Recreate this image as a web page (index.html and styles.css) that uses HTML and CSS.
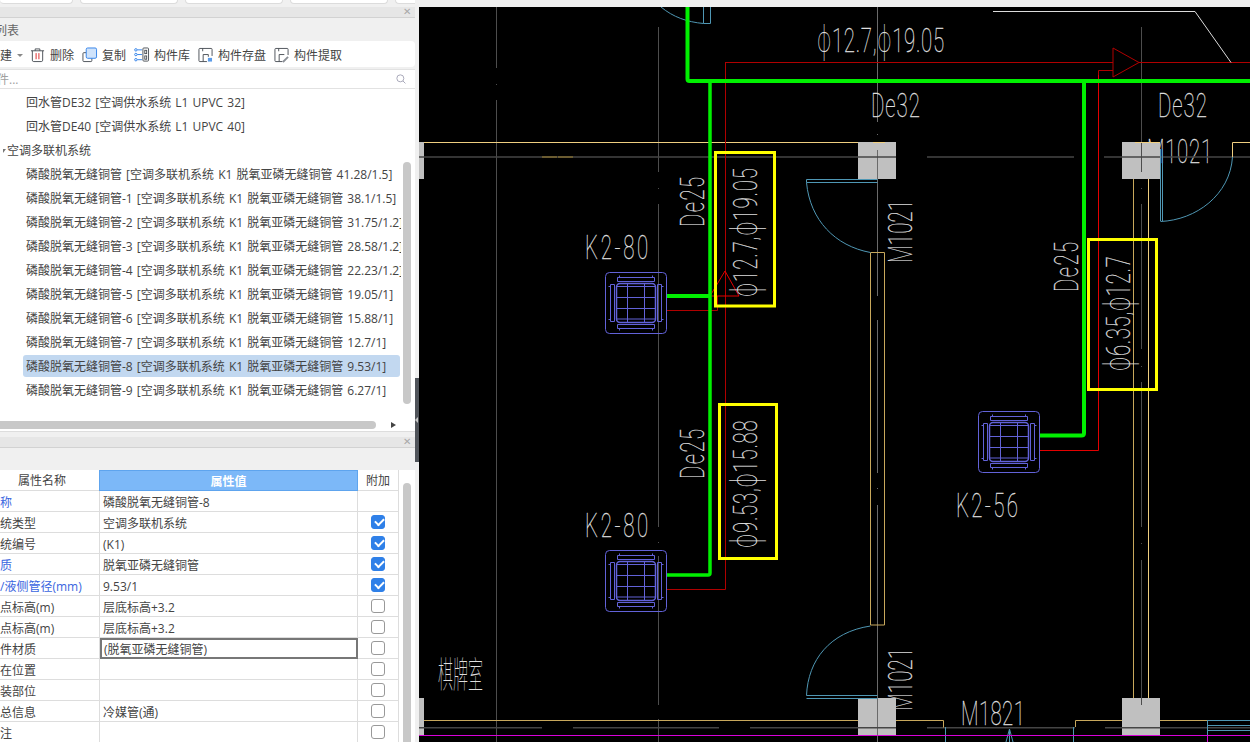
FILE: index.html
```html
<!DOCTYPE html>
<html lang="zh-CN">
<head>
<meta charset="utf-8">
<title>构件列表</title>
<link rel="stylesheet" href="styles.css">
</head>
<body>
<div class="app">
  <aside class="side">
    <div class="tabs">
      <span class="tab tab-a"></span><span class="tab"></span><span class="tab"></span><span class="tab"></span><span class="tab tab-z"></span>
    </div>

    <section class="panel list-panel">
      <div class="dock"><span class="close">✕</span></div>
      <div class="title"><span class="title-text">构件列表</span></div>
      <div class="toolbar">
        <span class="tool tool-new">新建<i class="caret"></i></span>
        <span class="tool">
          <svg class="ico" viewBox="0 0 16 16"><path class="i-dk" d="M1 3.500h14M5.500 3.500V1.500h5v2M2.500 3.500v10a1.500 1.500 0 0 0 1.500 1.500h8a1.500 1.500 0 0 0 1.500-1.500v-10"/><path class="i-rd" d="M6.500 6v6.500M9.500 6v6.500"/></svg>删除</span>
        <span class="tool">
          <svg class="ico" viewBox="0 0 16 16"><path class="i-dk" d="M4.500 5.500H2a1 1 0 0 0-1 1V14a1 1 0 0 0 1 1h7.500a1 1 0 0 0 1-1v-2.500"/><rect class="i-bl" x="4.500" y="0.500" width="11" height="11" rx="1.500"/></svg>复制</span>
        <span class="tool">
          <svg class="ico" viewBox="0 0 16 16"><path class="i-blue" d="M3.500 2.500h5M3.500 7.500h5M3.500 13h5"/><circle class="i-blue" cx="2" cy="2.500" r="1.300"/><circle class="i-blue" cx="2" cy="7.500" r="1.300"/><circle class="i-blue" cx="2" cy="13" r="1.300"/><rect class="i-dk" x="9.500" y="0.500" width="6" height="14" rx="1"/><rect class="i-dk" x="11.500" y="3" width="2" height="3.500"/><rect class="i-dk" x="11.500" y="9" width="2" height="3.500"/></svg>构件库</span>
        <span class="tool">
          <svg class="ico" viewBox="0 0 16 16"><path class="i-dk" d="M10 15H2a1 1 0 0 1-1-1V2a1 1 0 0 1 1-1h12a1 1 0 0 1 1 1v7M5.500 15V7.500H11V10M5 1v3"/><rect class="i-save" x="10" y="10.500" width="5.500" height="5"/></svg>构件存盘</span>
        <span class="tool">
          <svg class="ico" viewBox="0 0 16 16"><path class="i-dk" d="M9 15H2a1 1 0 0 1-1-1V2a1 1 0 0 1 1-1h12a1 1 0 0 1 1 1v6M5.500 15V7.500H11M5 1v3"/><path class="i-drop" d="M9.500 15.500l5.500-5.500"/></svg>构件提取</span>
      </div>
      <div class="search">
        <span class="placeholder">搜索构件...</span>
        <svg class="search-ico" viewBox="0 0 12 12"><circle cx="5.200" cy="5.200" r="4.200"/><path d="M8.300 8.300l3 3"/></svg>
      </div>
      <div class="tree">
        <div class="tree-body">
          <div class="row">回水管DE32 [空调供水系统 L1 UPVC 32]</div>
          <div class="row">回水管DE40 [空调供水系统 L1 UPVC 40]</div>
          <div class="row row-group"><i class="tw"></i>空调多联机系统</div>
          <div class="row">磷酸脱氧无缝铜管 [空调多联机系统 K1 脱氧亚磷无缝铜管 41.28/1.5]</div>
          <div class="row">磷酸脱氧无缝铜管-1 [空调多联机系统 K1 脱氧亚磷无缝铜管 38.1/1.5]</div>
          <div class="row">磷酸脱氧无缝铜管-2 [空调多联机系统 K1 脱氧亚磷无缝铜管 31.75/1.2]</div>
          <div class="row">磷酸脱氧无缝铜管-3 [空调多联机系统 K1 脱氧亚磷无缝铜管 28.58/1.2]</div>
          <div class="row">磷酸脱氧无缝铜管-4 [空调多联机系统 K1 脱氧亚磷无缝铜管 22.23/1.2]</div>
          <div class="row">磷酸脱氧无缝铜管-5 [空调多联机系统 K1 脱氧亚磷无缝铜管 19.05/1]</div>
          <div class="row">磷酸脱氧无缝铜管-6 [空调多联机系统 K1 脱氧亚磷无缝铜管 15.88/1]</div>
          <div class="row">磷酸脱氧无缝铜管-7 [空调多联机系统 K1 脱氧亚磷无缝铜管 12.7/1]</div>
          <div class="row row-sel">磷酸脱氧无缝铜管-8 [空调多联机系统 K1 脱氧亚磷无缝铜管 9.53/1]</div>
          <div class="row">磷酸脱氧无缝铜管-9 [空调多联机系统 K1 脱氧亚磷无缝铜管 6.27/1]</div>
        </div>
        <div class="vbar"></div>
        <div class="hbar-row"><div class="hbar"></div><i class="harrow"></i></div>
      </div>
    </section>

    <section class="panel prop-panel">
      <div class="dock"><span class="close">✕</span></div>
      <div class="title"></div>
      <div class="prop-body">
        <div class="grid">
          <div class="c h">属性名称</div><div class="c h hv">属性值</div><div class="c h">附加</div>

          <div class="c n b">名称</div><div class="c">磷酸脱氧无缝铜管-8</div><div class="c k"></div>
          <div class="c n">系统类型</div><div class="c">空调多联机系统</div><div class="c k"><i class="cb on"></i></div>
          <div class="c n">系统编号</div><div class="c">(K1)</div><div class="c k"><i class="cb on"></i></div>
          <div class="c n b">材质</div><div class="c">脱氧亚磷无缝铜管</div><div class="c k"><i class="cb on"></i></div>
          <div class="c n b">气/液侧管径(mm)</div><div class="c">9.53/1</div><div class="c k"><i class="cb on"></i></div>
          <div class="c n">起点标高(m)</div><div class="c">层底标高+3.2</div><div class="c k"><i class="cb"></i></div>
          <div class="c n">终点标高(m)</div><div class="c">层底标高+3.2</div><div class="c k"><i class="cb"></i></div>
          <div class="c n">构件材质</div><div class="c focus">(脱氧亚磷无缝铜管)</div><div class="c k"><i class="cb"></i></div>
          <div class="c n">所在位置</div><div class="c"></div><div class="c k"><i class="cb"></i></div>
          <div class="c n">安装部位</div><div class="c"></div><div class="c k"><i class="cb"></i></div>
          <div class="c n">汇总信息</div><div class="c">冷媒管(通)</div><div class="c k"><i class="cb"></i></div>
          <div class="c n">备注</div><div class="c"></div><div class="c k"><i class="cb"></i></div>
        </div>
        <div class="prop-scroll"></div>
      </div>
    </section>
  </aside>

  <div class="splitter"><span class="handle"></span></div>

  <main class="canvas">
    <svg class="cad" viewBox="419 7 831 735" xmlns="http://www.w3.org/2000/svg">
      <defs>
        <g id="unit">
          <rect x="0.500" y="0.500" width="61" height="61" rx="4"/>
          <rect class="unit-in" x="11.500" y="11.500" width="39" height="39" rx="3.500"/>
          <path d="M22.500 11.500v39M39.500 11.500v39M11.500 14.500h39M11.500 25.500h39M11.500 36.500h39M11.500 47h39"/>
          <path d="M12.500 5.500h37v4h-37zM14.500 3.500v2M47.500 3.500v2"/>
          <path d="M12.500 52.500h37v4h-37zM14.500 56.500v2M47.500 56.500v2"/>
          <path d="M5.500 12.500v37h4v-37zM3.500 14.500h2M3.500 47.500h2"/>
          <path d="M52.500 12.500v37h4v-37zM56.500 14.500h2M56.500 47.500h2"/>
        </g>
      </defs>

      <!-- labels that run under the columns -->
      <text class="t" textLength="105" lengthAdjust="spacing" transform="translate(1147 163) scale(.62 1)">M1021</text>
      <text class="t" textLength="102" lengthAdjust="spacing" transform="translate(912 263) rotate(-90) scale(.62 1)">M1021</text>
      <text class="t" textLength="102" lengthAdjust="spacing" transform="translate(911.500 711) rotate(-90) scale(.62 1)">M1021</text>

      <!-- columns -->
      <rect class="col" x="419" y="142" width="5" height="37"/>
      <rect class="col" x="858" y="142" width="38" height="37"/>
      <rect class="col" x="1122" y="142" width="38" height="37"/>
      <rect class="col" x="419" y="698" width="5" height="37"/>
      <rect class="col" x="858" y="698" width="38" height="37"/>
      <rect class="col" x="1122" y="698" width="38" height="37"/>

      <!-- axis lines -->
      <path class="ax" d="M496.500 7v61M496.500 84v1M496.500 100v642"/>
      <path class="ax" d="M658.500 27v145M658.500 188v1M658.500 204v323M658.500 542v1M658.500 556v149M658.500 719v23"/>
      <path class="ax ax-l" d="M877.500 7v115M877.500 134v1M877.500 150v146M877.500 320v153M877.500 488v1M877.500 505v237"/>
      <path class="ax" d="M1141.500 27v145M1141.500 188v1M1141.500 204v145M1141.500 366v1M1141.500 382v145M1141.500 543v1M1141.500 560v145"/>
      <path class="ax-h" d="M419 157h477M927 157h147M1104 157h146"/>
      <path class="ax-h" d="M419 727.700h123M573 727.700h146M750 727.700h146M927 727.700h148M1105 727.700h145"/>
      <path class="brown" d="M542 157h15M558 157h15"/>

      <!-- walls -->
      <path class="wall" d="M424 142.500h434M873 142.500h12M1135 142.500h25M1232.500 157V142.500H1250"/>
      <path class="wall-d" d="M870.500 252.500h14v372.500h-14zM1133.500 179v519"/>
      <path class="wall" d="M1148.500 179v519"/>
      <path class="wall-d" d="M424 720.500h434M896 720.500h47.500v7M1075.500 727v-6.500H1122M1160 720.500h47"/>

      <!-- doors -->
      <path class="door" d="M806.500 179.500h71M806.500 182.500h71M806.500 179.500v3M806.500 182.500C810 220 835 246 870.500 252.500"/>
      <path class="door" d="M806.500 695.500h71M806.500 698.500h71M806.500 695.500C808 660 830 632 870.500 626"/>
      <path class="door" d="M1160.500 149v72M1162.500 149v72M1160.500 221.500C1196 220 1230 195 1232.500 157"/>
      <path class="door" d="M703.500 7v16.500h7M710.500 7v16.500M661 7c12 10 26 15 42.500 16.500"/>
      <path class="door" d="M945.500 727v15M1073.500 727v15M1009.500 729v13M1006 742l3.500-13 3.500 13"/>
      <path class="door" d="M1207.500 720.500h43M1207.500 725.500h43M1207.500 730.500h43M1207.500 720v15"/>

      <path class="mag" d="M419 735.500h831M1207.500 735v7"/>

      <!-- refrigerant pipes -->
      <path class="pd" d="M725 62.500h388M1139 62.500h111M725.500 62v527.500H667"/>
      <path class="pd" d="M667 310.500h50.500V296"/>
      <path class="pd" d="M1113 48l26 14.500-26 14.500zM1113 70.500h-14.500V75"/>
      <path class="pr" d="M1098.500 75v375.500H1040"/>
      <path class="pr" d="M725 271l14 25h-29z"/>

      <!-- water pipes -->
      <path class="gn" d="M687.500 7v72q0 2 2 2H1250"/>
      <path class="gn gn-t" d="M710 83v490q0 2-2 2h-42"/>
      <path class="gn" d="M666 296h43"/>
      <path class="gn" d="M1084 83v350q0 2.500-2.500 2.500H1040"/>

      <path class="leader" d="M993 11.500h202l36 51"/>

      <!-- indoor units -->
      <use href="#unit" class="unit" x="605" y="272"/>
      <use href="#unit" class="unit" x="605" y="550"/>
      <use href="#unit" class="unit" x="978" y="411"/>

      <!-- labels -->
      <text class="t" textLength="205" lengthAdjust="spacing" transform="translate(817 52) scale(.62 1)"><tspan class="phi">ϕ</tspan>12.7,<tspan class="phi">ϕ</tspan>19.05</text>
      <text class="t" textLength="79" lengthAdjust="spacing" transform="translate(871 117) scale(.62 1)">De32</text>
      <text class="t" textLength="79" lengthAdjust="spacing" transform="translate(1158 117) scale(.62 1)">De32</text>
      <text class="t" textLength="102" lengthAdjust="spacing" transform="translate(585 259) scale(.62 1)">K2-80</text>
      <text class="t" textLength="102" lengthAdjust="spacing" transform="translate(585 537) scale(.62 1)">K2-80</text>
      <text class="t" textLength="100" lengthAdjust="spacing" transform="translate(956 517) scale(.62 1)">K2-56</text>
      <text class="t" textLength="103" lengthAdjust="spacing" transform="translate(961 725) scale(.62 1)">M1821</text>
      <text class="t" textLength="81" lengthAdjust="spacing" transform="translate(704 227) rotate(-90) scale(.62 1)">De25</text>
      <text class="t" textLength="81" lengthAdjust="spacing" transform="translate(704 479) rotate(-90) scale(.62 1)">De25</text>
      <text class="t" textLength="81" lengthAdjust="spacing" transform="translate(1078 292) rotate(-90) scale(.62 1)">De25</text>
      <text class="t" textLength="208" lengthAdjust="spacing" transform="translate(757 297) rotate(-90) scale(.62 1)"><tspan class="phi">ϕ</tspan>12.7,<tspan class="phi">ϕ</tspan>19.05</text>
      <text class="t" textLength="206" lengthAdjust="spacing" transform="translate(757 548) rotate(-90) scale(.62 1)"><tspan class="phi">ϕ</tspan>9.53,<tspan class="phi">ϕ</tspan>15.88</text>
      <text class="t" textLength="185" lengthAdjust="spacing" transform="translate(1130 371) rotate(-90) scale(.62 1)"><tspan class="phi">ϕ</tspan>6.35,<tspan class="phi">ϕ</tspan>12.7</text>
      <text class="t t-cn" x="438" y="688" textLength="45" lengthAdjust="spacingAndGlyphs">棋牌室</text>

      <!-- highlight boxes -->
      <rect class="mark" x="715.500" y="152.500" width="59" height="153.500"/>
      <rect class="mark" x="719.500" y="404.500" width="57" height="154"/>
      <rect class="mark" x="1088.500" y="239.500" width="68" height="150"/>
    </svg>
  </main>
</div>
</body>
</html>
```

FILE: styles.css
```css
* { box-sizing: border-box; }
html, body { margin: 0; padding: 0; }
body {
  width: 1250px;
  height: 742px;
  overflow: hidden;
  background: #f0f0f0;
  font-family: "Open Sans", "Noto Sans CJK SC", sans-serif;
  font-size: 12px;
  color: #444;
}
.app { display: flex; width: 1250px; height: 742px; overflow: hidden; }

/* left column */
.side { width: 415px; height: 742px; display: flex; flex-direction: column; overflow: hidden; }

.tabs { height: 7px; display: flex; gap: 7px; overflow: hidden; flex: none; }
.tab {
  width: 98px;
  height: 4px;
  background: #fff;
  border: 1px solid #dcdcdc;
  border-top: 0;
  border-radius: 0 0 4px 4px;
  flex: none;
}
.tab-a { width: 73px; border-left: 0; }
.tab-z { width: 30px; border-right: 0; }

.panel { display: flex; flex-direction: column; flex: none; overflow: hidden; }
.list-panel { height: 425px; }
.prop-panel { height: 310px; }

.dock {
  height: 11px;
  background: #e6e6e6;
  border-bottom: 1px solid #d2d2d2;
  display: flex;
  justify-content: flex-end;
  align-items: center;
  flex: none;
}
.close { font-family: "DejaVu Sans", sans-serif; font-size: 10px; line-height: 10px; color: #a8a8a8; margin-right: 3px; width: 9px; }
.title {
  height: 23px;
  background: #f0f0f0;
  flex: none;
  line-height: 26px;
  color: #666;
  overflow: hidden;
  white-space: nowrap;
}
.title-text { display: block; margin-left: -29px; }

.toolbar {
  height: 26px;
  padding-top: 2px;
  background: #fff;
  border-radius: 0 4px 4px 0;
  display: flex;
  align-items: center;
  white-space: nowrap;
  overflow: hidden;
  flex: none;
}
.tool { display: flex; align-items: center; gap: 5px; margin-right: 8px; color: #444; }
.tool-new { margin-left: -12px; gap: 0; margin-right: 7px; }
.caret {
  display: block;
  margin-left: 5px;
  border: 3px solid transparent;
  border-top: 3px solid #888;
  border-bottom: 0;
  width: 0;
  height: 0;
}
.ico { width: 15px; height: 16px; flex: none; overflow: visible; fill: none; }
.i-dk { fill: none; stroke: #4a4f55; stroke-width: 1; }
.i-rd { fill: none; stroke: #d22; stroke-width: 1; }
.i-bl { fill: #cfe3fb; stroke: #2f80e8; stroke-width: 1; }
.i-blue { fill: none; stroke: #2f80e8; stroke-width: 1; }
.i-save { fill: #5a9be8; stroke: #fff; stroke-width: 1; }
.i-drop { fill: none; stroke: #8b8f96; stroke-width: 2; }

.search {
  height: 20px;
  margin-top: 2px;
  background: #fff;
  border-top: 1px solid #e2e2e2;
  border-bottom: 1px solid #e2e2e2;
  display: flex;
  align-items: center;
  justify-content: space-between;
  padding-right: 9px;
  overflow: hidden;
  flex: none;
}
.placeholder { margin-left: -39px; color: #a0a0a0; white-space: nowrap; }
.search-ico { width: 10px; height: 10px; fill: none; stroke: #aab; stroke-width: 1.200; flex: none; overflow: visible; }

.tree { position: relative; flex: 1; background: #fff; overflow: hidden; border-bottom: 1px solid #ddd; }
.tree-body { padding: 2px 0 0 23px; width: 401px; overflow: hidden; }
.row {
  height: 24px;
  line-height: 24px;
  padding-left: 3px;
  white-space: nowrap;
  overflow: hidden;
  color: #444;
  word-spacing: 1px;
}
.row-group { margin-left: -20px; padding-left: 3px; display: flex; align-items: flex-start; }
.tw {
  display: block;
  margin: 10px 1px 0 -6px;
  border: 3px solid transparent;
  border-top: 4px solid #777;
  border-bottom: 0;
  width: 0;
  height: 0;
}
.row-sel { height: 22px; margin-bottom: 2px; background: #c2d8f0; border-radius: 3px; width: 377px; }
.vbar { position: absolute; left: 403px; top: 73px; width: 8px; height: 242px; background: #c8c8c8; border-radius: 4px; }
.hbar-row { position: absolute; left: 0; right: 0; top: 332px; height: 8px; display: flex; align-items: center; }
.hbar { width: 376px; height: 8px; background: #c8c8c8; border-radius: 0 4px 4px 0; }
.harrow {
  display: block;
  margin-left: 15px;
  border: 3.500px solid transparent;
  border-left: 5px solid #444;
  border-right: 0;
  width: 0;
  height: 0;
}

.prop-panel .dock { margin-top: 5px; }
.prop-panel .title { height: 22px; }
.prop-body { position: relative; flex: 1; background: #fff; overflow: hidden; }
.grid {
  display: grid;
  grid-template-columns: 115px 258px 41px;
  grid-auto-rows: 21px;
  margin-left: -15px;
  width: 414px;
}
.c {
  border-right: 1px solid #ddd;
  border-bottom: 1px solid #ddd;
  padding-left: 3px;
  line-height: 23px;
  white-space: nowrap;
  overflow: hidden;
  color: #444;
}
.c.h { text-align: center; padding: 0; line-height: 22px; }
.c.hv { background: #7cb8f8; color: #fff; font-weight: 700; border: 1px solid #5ea4ee; line-height: 21px; margin-left: -1px; }
.c.b { color: #3a66e0; }
.c.k { display: flex; align-items: center; justify-content: center; padding: 0 1px 0 0; }
.c.focus { border: 2px solid #777; line-height: 20px; padding-left: 2px; }
.cb {
  display: block;
  width: 14px;
  height: 14px;
  border: 1px solid #999;
  border-radius: 3px;
  background: #fff;
  position: relative;
}
.cb.on { background: #2f80e8; border-color: #2f80e8; }
.cb.on::after {
  content: "";
  position: absolute;
  left: 3px;
  top: 2px;
  width: 7px;
  height: 4px;
  border-left: 2px solid #fff;
  border-bottom: 2px solid #fff;
  transform: rotate(-45deg);
}
.prop-scroll { position: absolute; left: 403px; top: 13px; bottom: 0; width: 8px; background: #c8c8c8; border-radius: 4px 4px 0 0; }

/* splitter */
.splitter { width: 4px; height: 742px; background: #f0f0f0; padding-top: 378px; flex: none; }
.handle { display: flex; align-items: center; width: 4px; height: 84px; background: #50545a; }
.handle::after {
  content: "";
  display: block;
  border: 3px solid transparent;
  border-right: 3px solid #c8c8c8;
  border-left: 0;
  width: 0;
  height: 0;
}

/* drawing */
.canvas { flex: 1; height: 735px; margin-top: 7px; background: #000; overflow: hidden; }
.cad { display: block; width: 831px; height: 735px; }
.cad path, .cad rect, .cad circle { fill: none; }
.cad .col { fill: #c0c0c0; }
.ax { stroke: #4d4d4d; stroke-width: 1; }
.ax-l { stroke: #6a6a6a; }
.ax-h { stroke: #454545; stroke-width: 1.600; }
.brown { stroke: #7d6a30; stroke-width: 1.600; }
.wall { stroke: #f0cf80; stroke-width: 1; }
.wall-d { stroke: #c8a85c; stroke-width: 1; }
.door { stroke: #4f97b4; stroke-width: 1; }
.mag { stroke: #d800d8; stroke-width: 1; }
.pd { stroke: #b00000; stroke-width: 1; }
.pr { stroke: #e40000; stroke-width: 1; }
.gn { stroke: #00f000; stroke-width: 4; }
.gn-t { stroke-width: 3.500; }
.leader { stroke: #dcdcdc; stroke-width: 1; }
.unit { fill: none; stroke: #6262d8; stroke-width: 1; }
.unit-in { stroke-width: 1.500; }
.mark { stroke: #ffff00; stroke-width: 3; }
.t {
  font-family: "Roboto", "DejaVu Sans", sans-serif;
  font-weight: 100;
  font-size: 33px;
  fill: #dedede;
  stroke: #dedede;
  stroke-width: 0.300px;
}
.phi { font-family: "Noto Sans", "DejaVu Sans", sans-serif; font-size: 36px; stroke-width: 0; }
.t-cn { font-family: "Noto Sans CJK SC", sans-serif; font-size: 36px; stroke-width: 0; }
```
